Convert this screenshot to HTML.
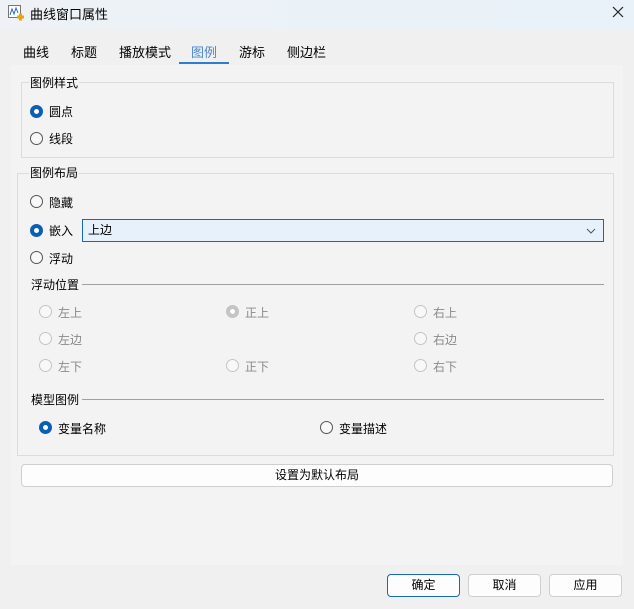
<!DOCTYPE html>
<html><head><meta charset="utf-8"><style>
*{margin:0;padding:0;box-sizing:border-box}
body{width:634px;height:609px;background:#f0f0f0;font-family:"Liberation Sans","Noto Sans CJK SC",sans-serif;font-size:12px;color:#000;position:relative;overflow:hidden}
.a{position:absolute;white-space:nowrap}
.title{left:0;top:0;width:634px;height:29px;background:linear-gradient(90deg,#eef2f6,#e8f2f8)}
.page{left:11px;top:65px;width:612px;height:500px;background:#f3f3f3}
.grp{border:1px solid #dcdcdc}
.lbl{background:#f3f3f3;padding:0 1px;line-height:14px}
.r{width:13px;height:13px;border-radius:50%;border:1px solid #555;background:#f8f8f8}
.r.on{border:4px solid #0a5fb4;background:#fff}
.r.dis{border-color:#c4c4c4}
.r.dison{border:4px solid #c4c4c4;background:#fff}
.g{color:#8a8a8a}
.hl{height:1px;background:#a0a0a0}
.btn{border:1px solid #cfcfcf;border-radius:4px;background:#fdfdfd;text-align:center;line-height:20px}
</style></head><body>
<div class="a title"></div>
<svg class="a" style="left:8px;top:5px" width="17" height="17"><rect x="0.5" y="0.5" width="12" height="12" fill="#fff" stroke="#777"/><path d="M2 10 L4 4 L6 9 L8 3 L10 8" fill="none" stroke="#2a6cc0" stroke-width="1"/><path d="M9 12h7M12.5 8.5v7" stroke="#e8a800" stroke-width="3"/></svg>
<div class="a" style="left:30px;top:4px;font-size:13px">曲线窗口属性</div>
<svg class="a" style="left:612px;top:6px" width="12" height="12"><path d="M1 1L11 11M11 1L1 11" stroke="#222" stroke-width="1.2"/></svg>
<div class="a" style="left:23px;top:42px;font-size:13px">曲线</div>
<div class="a" style="left:71px;top:42px;font-size:13px">标题</div>
<div class="a" style="left:119px;top:42px;font-size:13px">播放模式</div>
<div class="a" style="left:191px;top:42px;font-size:13px;color:#4a86c8">图例</div>
<div class="a" style="left:179px;top:62px;width:50px;height:2px;background:#2e7bd0"></div>
<div class="a" style="left:239px;top:42px;font-size:13px">游标</div>
<div class="a" style="left:287px;top:42px;font-size:13px">侧边栏</div>
<div class="a page"></div>
<div class="a grp" style="left:21px;top:82px;width:593px;height:76px"></div>
<div class="a lbl" style="left:29px;top:76px">图例样式</div>
<div class="a r on" style="left:30px;top:105px"></div><div class="a" style="left:49px;top:103px">圆点</div>
<div class="a r" style="left:30px;top:132px"></div><div class="a" style="left:49px;top:130px">线段</div>
<div class="a grp" style="left:17px;top:173px;width:597px;height:283px"></div>
<div class="a lbl" style="left:29px;top:166px">图例布局</div>
<div class="a r" style="left:30px;top:195px"></div><div class="a" style="left:49px;top:194px">隐藏</div>
<div class="a r on" style="left:30px;top:224px"></div><div class="a" style="left:49px;top:222px">嵌入</div>
<div class="a" style="left:82px;top:219px;width:522px;height:23px;border:1px solid #1a66b8;background:#e6f1fb;padding-left:5px;line-height:21px">上边</div>
<svg class="a" style="left:586px;top:227px" width="10" height="8"><path d="M1 2L5 6L9 2" fill="none" stroke="#555"/></svg>
<div class="a r" style="left:30px;top:251px"></div><div class="a" style="left:49px;top:250px">浮动</div>
<div class="a" style="left:31px;top:276px">浮动位置</div><div class="a hl" style="left:82px;top:284px;width:522px"></div>
<div class="a r dis" style="left:39px;top:305px"></div><div class="a g" style="left:58px;top:304px">左上</div>
<div class="a r dison" style="left:226px;top:305px"></div><div class="a g" style="left:245px;top:304px">正上</div>
<div class="a r dis" style="left:414px;top:305px"></div><div class="a g" style="left:433px;top:304px">右上</div>
<div class="a r dis" style="left:39px;top:332px"></div><div class="a g" style="left:58px;top:331px">左边</div>
<div class="a r dis" style="left:414px;top:332px"></div><div class="a g" style="left:433px;top:331px">右边</div>
<div class="a r dis" style="left:39px;top:359px"></div><div class="a g" style="left:58px;top:358px">左下</div>
<div class="a r dis" style="left:226px;top:359px"></div><div class="a g" style="left:245px;top:358px">正下</div>
<div class="a r dis" style="left:414px;top:359px"></div><div class="a g" style="left:433px;top:358px">右下</div>
<div class="a" style="left:31px;top:391px">模型图例</div><div class="a hl" style="left:82px;top:399px;width:522px"></div>
<div class="a r on" style="left:39px;top:421px"></div><div class="a" style="left:58px;top:420px">变量名称</div>
<div class="a r" style="left:320px;top:421px"></div><div class="a" style="left:339px;top:420px">变量描述</div>
<div class="a btn" style="left:21px;top:464px;width:592px;height:23px">设置为默认布局</div>
<div class="a btn" style="left:387px;top:574px;width:73px;height:23px;border-color:#1a66b8">确定</div>
<div class="a btn" style="left:468px;top:574px;width:73px;height:23px">取消</div>
<div class="a btn" style="left:549px;top:574px;width:73px;height:23px">应用</div>
</body></html>
